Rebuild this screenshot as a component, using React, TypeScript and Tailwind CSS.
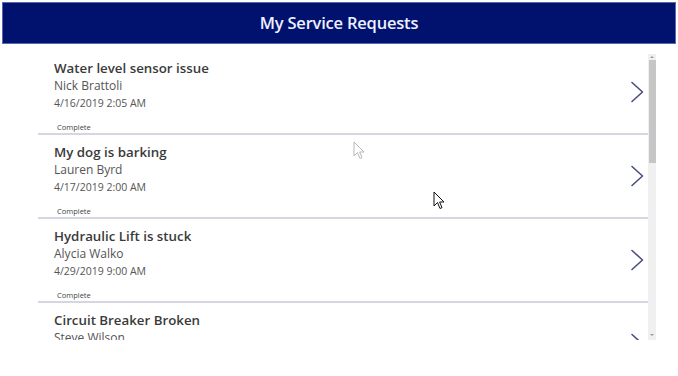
import React from "react";

const REQUESTS = [
  { title: "Water level sensor issue", name: "Nick Brattoli", date: "4/16/2019 2:05 AM", status: "Complete" },
  { title: "My dog is barking", name: "Lauren Byrd", date: "4/17/2019 2:00 AM", status: "Complete" },
  { title: "Hydraulic Lift is stuck", name: "Alycia Walko", date: "4/29/2019 9:00 AM", status: "Complete" },
  { title: "Circuit Breaker Broken", name: "Steve Wilson", date: "5/1/2019 10:00 AM", status: "Complete" },
];

function Chevron() {
  return (
    <svg width="14" height="22" viewBox="0 0 14 22" fill="none" aria-hidden>
      <path d="M2 1.5 L12.5 11 L2 20.5" stroke="#4b4f80" strokeWidth="1.6" strokeLinecap="round" strokeLinejoin="round" />
    </svg>
  );
}

function Cursor({ faded }: { faded?: boolean }) {
  return (
    <svg width="12" height="19" viewBox="0 0 12 19" aria-hidden>
      <path
        d="M1 1 L1 15 L4.5 11.5 L7 17.5 L9 16.6 L6.6 11 L11 11 Z"
        fill="#fff"
        stroke={faded ? "#9a9a9a" : "#111"}
        strokeWidth="1"
        strokeLinejoin="round"
      />
    </svg>
  );
}

export default function App() {
  return (
    <div className="relative h-[376px] w-[678px] overflow-hidden bg-white font-['Open_Sans',sans-serif]">
      <header className="mx-[2px] mt-[2px] flex h-[42px] items-center justify-center border border-[#5a68b0] bg-[#00126e]">
        <h1 className="text-[16.5px] font-semibold tracking-[-0.2px] text-[#eef0ff]">My Service Requests</h1>
      </header>

      <div className="mt-[7px] flex h-[289px]">
        <ul className="ml-[38px] h-full w-[610px] overflow-hidden">
          {REQUESTS.map((r) => (
            <li
              key={r.title}
              className="box-border flex h-[84px] border-b-2 border-[#d4d6e2] pl-4 pr-1"
            >
              <div className="flex-1 pt-[7px]">
                <p className="text-[13.3px] font-semibold leading-[20px] text-[#3a3a3a]">{r.title}</p>
                <p className="text-[12px] leading-[16px] text-[#555]">{r.name}</p>
                <p className="mt-[1px] text-[10.5px] leading-[16px] text-[#555]">{r.date}</p>
                <p className="mt-[11px] pl-[3px] text-[7.5px] leading-[10px] text-[#444]">{r.status}</p>
              </div>
              <div className="flex items-center pb-[1px]">
                <Chevron />
              </div>
            </li>
          ))}
        </ul>

        <div className="mt-[3px] flex h-[286px] w-[8px] flex-col items-center bg-[#f0f0f0]">
          <span className="mt-[2px] h-0 w-0 border-x-[2px] border-b-[2px] border-x-transparent border-b-[#999]" />
          <div className="mt-[2px] h-[103px] w-[7px] bg-[#c6c6c6]" />
          <div className="flex-1" />
          <span className="mb-[4px] h-0 w-0 border-x-[2px] border-t-[2px] border-x-transparent border-t-[#999]" />
        </div>
      </div>

      <div className="absolute left-[353px] top-[141px] opacity-70">
        <Cursor faded />
      </div>
      <div className="absolute left-[433px] top-[191px]">
        <Cursor />
      </div>
    </div>
  );
}
